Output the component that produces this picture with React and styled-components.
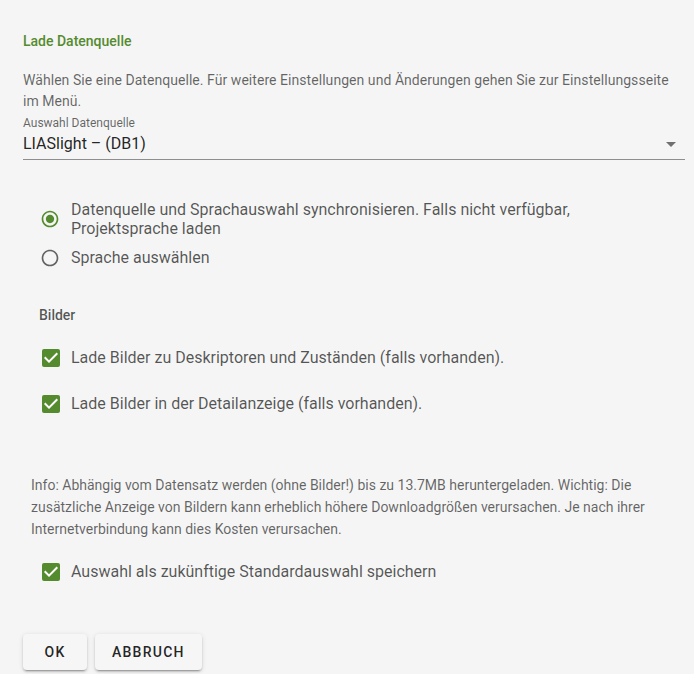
import React from "react";
import styled, { createGlobalStyle } from "styled-components";

const Global = createGlobalStyle`
  html, body { margin: 0; padding: 0; background: #f5f5f5; }
  body { font-family: Roboto, "Noto Sans", "Liberation Sans", sans-serif; }
  * { box-sizing: border-box; }
`;

const GREEN = "#558b2f";

const Page = styled.div`
  width: 694px;
  min-height: 674px;
  padding: 31px 9px 0 23px;
  display: flex;
  flex-direction: column;
`;

const Title = styled.h2`
  margin: 0;
  font-size: 14px;
  line-height: 20px;
  font-weight: 500;
  color: ${GREEN};
`;

const Description = styled.p`
  margin: 18.5px 0 0;
  padding-right: 12px;
  font-size: 14px;
  line-height: 21px;
  letter-spacing: 0.05px;
  color: rgba(0, 0, 0, 0.6);
`;

const Field = styled.div`
  margin-top: 3.5px;
  display: flex;
  flex-direction: column;
`;

const FieldLabel = styled.label`
  font-size: 12px;
  line-height: 16px;
  color: rgba(0, 0, 0, 0.6);
`;

const SelectBox = styled.div`
  margin-top: 1px;
  display: flex;
  align-items: center;
  justify-content: space-between;
  height: 28px;
  padding-bottom: 3px;
  border-bottom: 1px solid rgba(0, 0, 0, 0.42);
`;

const SelectValue = styled.span`
  font-size: 16px;
  line-height: 24px;
  color: rgba(0, 0, 0, 0.87);
`;

const Arrow = styled.svg`
  width: 24px;
  height: 24px;
  margin-right: 2px;
  fill: rgba(0, 0, 0, 0.54);
`;

const RadioGroup = styled.div`
  margin-top: 39.5px;
  padding-left: 17px;
  display: flex;
  flex-direction: column;
  gap: 10px;
`;

const OptionRow = styled.label`
  display: flex;
  align-items: center;
  gap: ${(p) => p.$gap}px;
  font-size: 16px;
  line-height: 19.2px;
  color: rgba(0, 0, 0, 0.66);
  max-width: 600px;
`;

const IconSvg = styled.svg`
  flex: none;
  width: ${(p) => p.$size}px;
  height: ${(p) => p.$size}px;
  fill: ${(p) => p.$color};
`;

const SectionLabel = styled.div`
  margin-top: 37px;
  margin-left: 16px;
  font-size: 14px;
  line-height: 20px;
  font-weight: 500;
  color: rgba(0, 0, 0, 0.66);
`;

const CheckGroup = styled.div`
  margin-top: ${(p) => p.$top}px;
  padding-left: 16px;
  display: flex;
  flex-direction: column;
  gap: 22px;
`;

const Info = styled.p`
  margin: 58px 0 0 8px;
  padding-right: 14px;
  font-size: 14px;
  line-height: 22px;
  color: rgba(0, 0, 0, 0.6);
`;

const Actions = styled.div`
  margin-top: 50px;
  display: flex;
  gap: 8px;
`;

const Button = styled.button`
  height: 36px;
  min-width: 64px;
  padding: 0 17px;
  border: none;
  border-radius: 4px;
  background: #f6f6f6;
  box-shadow: 0 3px 1px -2px rgba(0, 0, 0, 0.2), 0 2px 2px 0 rgba(0, 0, 0, 0.14),
    0 1px 5px 0 rgba(0, 0, 0, 0.12);
  font-family: Roboto, "Noto Sans", sans-serif;
  font-size: 14px;
  font-weight: 500;
  letter-spacing: 1.25px;
  text-transform: uppercase;
  color: rgba(0, 0, 0, 0.87);
  cursor: pointer;
`;

const RadioIcon = ({ checked }) => (
  <IconSvg $size={20} $color={checked ? GREEN : "rgba(0,0,0,0.6)"} viewBox="0 0 24 24">
    <path d="M12 2C6.48 2 2 6.48 2 12s4.48 10 10 10 10-4.48 10-10S17.52 2 12 2zm0 18c-4.42 0-8-3.58-8-8s3.58-8 8-8 8 3.58 8 8-3.58 8-8 8z" />
    {checked && <path d="M12 7c-2.76 0-5 2.24-5 5s2.24 5 5 5 5-2.24 5-5-2.24-5-5-5z" />}
  </IconSvg>
);

const CheckIcon = () => (
  <IconSvg $size={24} $color={GREEN} viewBox="0 0 24 24">
    <rect x="3" y="3" width="18" height="18" rx="2" />
    <path d="M10 17l-5-5 1.41-1.41L10 14.17l7.59-7.59L19 8z" fill="#ffffff" />
  </IconSvg>
);

const Radio = ({ checked, children }) => (
  <OptionRow $gap={11}>
    <RadioIcon checked={checked} />
    <span>{children}</span>
  </OptionRow>
);

const Check = ({ children }) => (
  <OptionRow $gap={8}>
    <CheckIcon />
    <span>{children}</span>
  </OptionRow>
);

export default function App() {
  return (
    <>
      <Global />
      <Page>
        <Title>Lade Datenquelle</Title>
        <Description>
          Wählen Sie eine Datenquelle. Für weitere Einstellungen und Änderungen gehen Sie zur
          Einstellungsseite im Menü.
        </Description>
        <Field>
          <FieldLabel>Auswahl Datenquelle</FieldLabel>
          <SelectBox>
            <SelectValue>LIASlight – (DB1)</SelectValue>
            <Arrow viewBox="0 0 24 24">
              <path d="M7 10l5 5 5-5z" />
            </Arrow>
          </SelectBox>
        </Field>

        <RadioGroup>
          <Radio checked>
            Datenquelle und Sprachauswahl synchronisieren. Falls nicht verfügbar, Projektsprache
            laden
          </Radio>
          <Radio>Sprache auswählen</Radio>
        </RadioGroup>

        <SectionLabel>Bilder</SectionLabel>
        <CheckGroup $top={21}>
          <Check>Lade Bilder zu Deskriptoren und Zuständen (falls vorhanden).</Check>
          <Check>Lade Bilder in der Detailanzeige (falls vorhanden).</Check>
        </CheckGroup>

        <Info>
          Info: Abhängig vom Datensatz werden (ohne Bilder!) bis zu 13.7MB heruntergeladen.
          Wichtig: Die zusätzliche Anzeige von Bildern kann erheblich höhere Downloadgrößen
          verursachen. Je nach ihrer Internetverbindung kann dies Kosten verursachen.
        </Info>

        <CheckGroup $top={20}>
          <Check>Auswahl als zukünftige Standardauswahl speichern</Check>
        </CheckGroup>

        <Actions>
          <Button>OK</Button>
          <Button>Abbruch</Button>
        </Actions>
      </Page>
    </>
  );
}
